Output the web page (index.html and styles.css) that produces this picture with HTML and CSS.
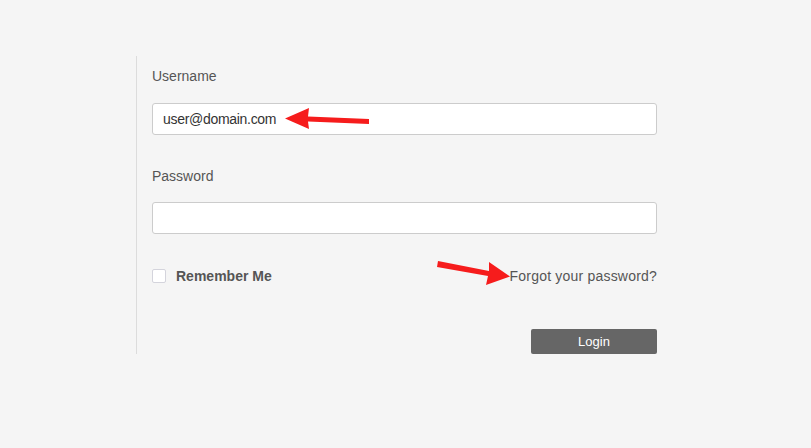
FILE: index.html
```html
<!DOCTYPE html>
<html>
<head>
<meta charset="utf-8">
<link rel="stylesheet" href="styles.css">
</head>
<body>
<div class="page">
  <form class="login">
    <label class="label">Username</label>
    <div class="input">user@domain.com</div>
    <label class="label label-pw">Password</label>
    <div class="input"></div>
    <div class="row">
      <span class="remember"><span class="check"></span>Remember Me</span>
      <a class="forgot">Forgot your password?</a>
    </div>
    <div class="actions">
      <button type="button" class="btn">Login</button>
    </div>
  </form>
  <svg class="annot" width="811" height="448" viewBox="0 0 811 448">
    <polygon points="285,118.5 309,108 308,116.5 369,119 369,124 308,121.5 309,129" fill="#f61c1c"/>
    <polygon points="438,261 489,271 489,262 510,276.5 486,285 488,276 437,267" fill="#f61c1c"/>
  </svg>
</div>
</body>
</html>
```
FILE: styles.css
```css
html, body {
  margin: 0;
  padding: 0;
  background: #f5f5f5;
}
.page {
  position: relative;
  width: 811px;
  height: 448px;
  padding-top: 56px;
  box-sizing: border-box;
  font-family: "Liberation Sans", Arial, sans-serif;
}
.login {
  margin-left: 136px;
  width: 505px;
  border-left: 1px solid #dcdcdc;
  padding: 10px 0 0 15px;
  display: flex;
  flex-direction: column;
  height: 288px;
  box-sizing: content-box;
}
.label {
  font-size: 14px;
  line-height: 20px;
  color: #555;
  margin-bottom: 17px;
}
.label-pw {
  margin-bottom: 16px;
}
.input {
  height: 30px;
  border: 1px solid #ccc;
  border-radius: 3px;
  background: #fff;
  font-size: 14px;
  line-height: 30px;
  padding-left: 10px;
  color: #333;
  letter-spacing: -0.3px;
  margin-bottom: 31px;
}
.row {
  display: flex;
  justify-content: space-between;
  align-items: center;
  height: 20px;
  font-size: 14px;
  color: #555;
  margin-top: 1px;
}
.remember {
  display: flex;
  align-items: center;
  font-weight: bold;
}
.check {
  width: 12px;
  height: 12px;
  border: 1px solid #d4d4dc;
  border-radius: 2px;
  background: #fff;
  margin-right: 10px;
}
.forgot {
  color: #555;
  letter-spacing: 0.2px;
}
.actions {
  display: flex;
  justify-content: flex-end;
  margin-top: 43px;
}
.btn {
  width: 126px;
  height: 25px;
  border: none;
  border-radius: 2px;
  background: #666;
  color: #fff;
  font-family: "Liberation Sans", Arial, sans-serif;
  font-size: 13px;
  font-weight: 500;
  padding: 0;
}
.annot {
  position: absolute;
  left: 0;
  top: 0;
  pointer-events: none;
}
```
